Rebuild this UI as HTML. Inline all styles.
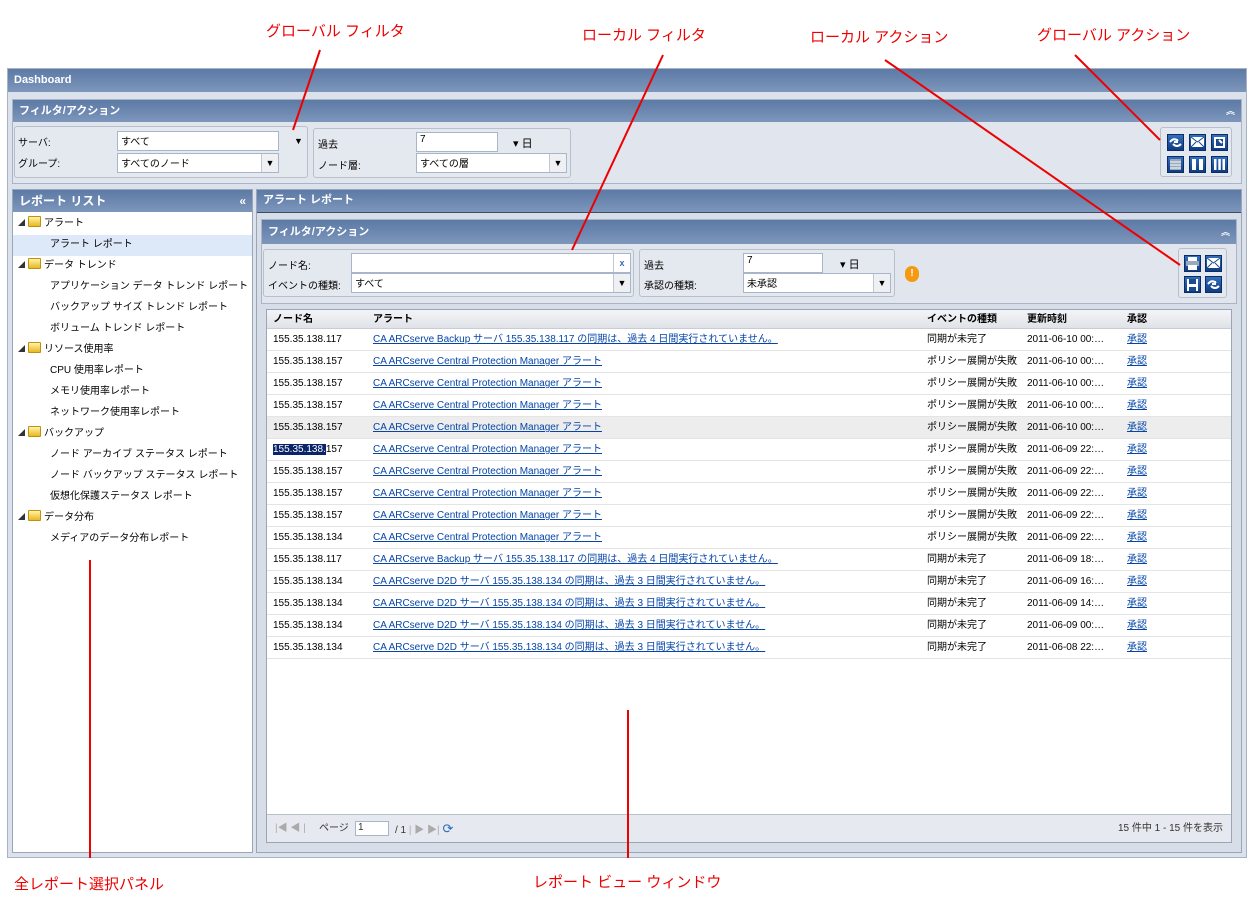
<!DOCTYPE html>
<html><head><meta charset="utf-8"><style>
*{box-sizing:border-box;margin:0;padding:0}
body{width:1252px;height:913px;background:#fff;position:relative;font-family:"Liberation Sans","Noto Sans CJK JP",sans-serif;font-size:10px;color:#000;overflow:hidden}
.a{position:absolute}
.hd{background:linear-gradient(#5c7aa6,#7d96bb);color:#fff;font-weight:bold;font-size:11px;padding-left:6px}
.fs{border:1px solid #b8c0cc;border-radius:3px;background:#e4e8ef}
.in{background:#fff;border:1px solid #a9b6c9;font-size:10px;padding:1px 3px}
.dd{position:absolute;width:17px;border-left:1px solid #c0c8d4;background:#eef0f4;font-size:9px;text-align:center}
.ic{position:absolute;width:17px;height:17px}
.lbl{position:absolute;color:#e00;font-size:15px}
.row{position:absolute;left:0;width:964px;height:22px;border-bottom:1px solid #e4e4e4;font-size:10px;line-height:21px}
.row span{position:absolute}
.lk{color:#0645a8;text-decoration:underline}
.tr{position:absolute;font-size:10px;height:21px;line-height:21px}
.ex{display:inline-block;width:0;height:0;border-left:7px solid transparent;border-bottom:7px solid #333;margin-right:3px}
.fd{display:inline-block;width:13px;height:11px;background:linear-gradient(#fff3a8,#e8b820);border:1px solid #c09010;border-radius:1px;vertical-align:-1px;margin-right:3px}
</style></head><body>
<svg width="0" height="0" style="position:absolute"><defs>
<linearGradient id="g" x1="0" y1="0" x2="0" y2="1"><stop offset="0" stop-color="#3470c0"/><stop offset="1" stop-color="#0e3a80"/></linearGradient>
<symbol id="bx" viewBox="0 0 17 17"><rect x=".5" y=".5" width="16" height="16" fill="url(#g)" stroke="#0b2d66"/></symbol>
</defs></svg>
<!-- annotations -->
<div class="lbl" style="left:266px;top:20px">グローバル フィルタ</div>
<div class="lbl" style="left:582px;top:24px">ローカル フィルタ</div>
<div class="lbl" style="left:810px;top:26px">ローカル アクション</div>
<div class="lbl" style="left:1037px;top:24px">グローバル アクション</div>
<div class="lbl" style="left:14px;top:873px">全レポート選択パネル</div>
<div class="lbl" style="left:533px;top:871px">レポート ビュー ウィンドウ</div>

<div class="a" style="left:7px;top:68px;width:1240px;height:790px;background:#dce2ec;border:1px solid #a8b2c2"></div>
<div class="a hd" style="left:8px;top:69px;width:1238px;height:23px;line-height:23px">Dashboard</div>

<div class="a" style="left:12px;top:99px;width:1230px;height:85px;background:#e0e5ee;border:1px solid #aab4c4"></div>
<div class="a hd" style="left:13px;top:100px;width:1228px;height:22px;line-height:22px">フィルタ/アクション<span style="position:absolute;right:6px;font-size:9px">︽</span></div>
<div class="a fs" style="left:14px;top:126px;width:294px;height:52px"></div>
<div class="a" style="left:18px;top:134px">サーバ:</div>
<div class="a" style="left:18px;top:155px">グループ:</div>
<div class="a in" style="left:117px;top:131px;width:162px;height:20px">すべて</div>
<div class="a" style="left:294px;top:136px;font-size:9px">▼</div>
<div class="a in" style="left:117px;top:153px;width:162px;height:20px">すべてのノード<div class="dd" style="right:0;top:0;height:18px;line-height:18px">▼</div></div>
<div class="a fs" style="left:313px;top:128px;width:258px;height:50px"></div>
<div class="a" style="left:318px;top:136px">過去</div>
<div class="a" style="left:318px;top:157px">ノード層:</div>
<div class="a in" style="left:416px;top:132px;width:82px;height:20px">7</div>
<div class="a" style="left:513px;top:135px;font-size:11px">▾ 日</div>
<div class="a in" style="left:416px;top:153px;width:151px;height:20px">すべての層<div class="dd" style="right:0;top:0;height:18px;line-height:18px">▼</div></div>
<div class="a fs" style="left:1160px;top:127px;width:72px;height:50px"></div>
<svg class="a" style="left:1160px;top:127px" width="72" height="50">
<use href="#bx" x="7" y="7" width="17" height="17"/><path d="M10 15 q4-5 8-1 M17 12v3h-3 M21 17 q-4 4-8 0" stroke="#fff" stroke-width="2" fill="none"/>
<use href="#bx" x="29" y="7" width="17" height="17"/><rect x="31" y="10" width="13" height="10" fill="#fff"/><path d="M31 10l6.5 5 6.5-5M31 20l5-5M44 20l-5-5" stroke="#1a4a90" fill="none"/>
<use href="#bx" x="51" y="7" width="17" height="17"/><rect x="54" y="10" width="11" height="11" fill="#fff"/><rect x="56" y="12" width="7" height="7" fill="#1a4a90"/><path d="M59 13l3 3" stroke="#fff" stroke-width="2"/>
<use href="#bx" x="7" y="29" width="17" height="17"/><rect x="10" y="32" width="11" height="11" fill="#9ab"/><path d="M10 35h11M10 38h11M10 41h11" stroke="#fff"/>
<use href="#bx" x="29" y="29" width="17" height="17"/><rect x="32" y="32" width="4" height="11" fill="#fff"/><rect x="39" y="32" width="4" height="11" fill="#fff"/>
<use href="#bx" x="51" y="29" width="17" height="17"/><rect x="54" y="32" width="2.5" height="11" fill="#fff"/><rect x="58.3" y="32" width="2.5" height="11" fill="#fff"/><rect x="62.5" y="32" width="2.5" height="11" fill="#fff"/>
</svg>

<div class="a" style="left:12px;top:189px;width:241px;height:664px;background:#fff;border:1px solid #9aa6b8"></div>
<div class="a hd" style="left:13px;top:190px;width:239px;height:22px;line-height:22px;font-size:12px">レポート リスト<span style="position:absolute;right:6px">«</span></div>
<div class="a" style="left:13px;top:235px;width:239px;height:21px;background:#dde8f8"></div>
<div class="tr" style="left:18px;top:213px"><i class="ex"></i><i class="fd"></i>アラート</div>
<div class="tr" style="left:50px;top:234px">アラート レポート</div>
<div class="tr" style="left:18px;top:255px"><i class="ex"></i><i class="fd"></i>データ トレンド</div>
<div class="tr" style="left:50px;top:276px">アプリケーション データ トレンド レポート</div>
<div class="tr" style="left:50px;top:297px">バックアップ サイズ トレンド レポート</div>
<div class="tr" style="left:50px;top:318px">ボリューム トレンド レポート</div>
<div class="tr" style="left:18px;top:339px"><i class="ex"></i><i class="fd"></i>リソース使用率</div>
<div class="tr" style="left:50px;top:360px">CPU 使用率レポート</div>
<div class="tr" style="left:50px;top:381px">メモリ使用率レポート</div>
<div class="tr" style="left:50px;top:402px">ネットワーク使用率レポート</div>
<div class="tr" style="left:18px;top:423px"><i class="ex"></i><i class="fd"></i>バックアップ</div>
<div class="tr" style="left:50px;top:444px">ノード アーカイブ ステータス レポート</div>
<div class="tr" style="left:50px;top:465px">ノード バックアップ ステータス レポート</div>
<div class="tr" style="left:50px;top:486px">仮想化保護ステータス レポート</div>
<div class="tr" style="left:18px;top:507px"><i class="ex"></i><i class="fd"></i>データ分布</div>
<div class="tr" style="left:50px;top:528px">メディアのデータ分布レポート</div>

<div class="a" style="left:256px;top:189px;width:986px;height:664px;background:#d8dee8;border:1px solid #9aa6b8"></div>
<div class="a hd" style="left:257px;top:190px;width:984px;height:23px;line-height:21px;border-bottom:1px solid #3d4d66">アラート レポート</div>
<div class="a" style="left:261px;top:219px;width:976px;height:85px;background:#e0e5ee;border:1px solid #aab4c4"></div>
<div class="a hd" style="left:262px;top:220px;width:974px;height:24px;line-height:24px">フィルタ/アクション<span style="position:absolute;right:6px;font-size:9px">︽</span></div>
<div class="a fs" style="left:263px;top:249px;width:371px;height:48px"></div>
<div class="a" style="left:268px;top:257px">ノード名:</div>
<div class="a" style="left:268px;top:277px">イベントの種類:</div>
<div class="a in" style="left:351px;top:253px;width:280px;height:20px"><div class="dd" style="right:0;top:0;height:18px;line-height:18px;color:#3a6ab0;background:#fff;font-weight:bold">x</div></div>
<div class="a in" style="left:351px;top:273px;width:280px;height:20px">すべて<div class="dd" style="right:0;top:0;height:18px;line-height:18px">▼</div></div>
<div class="a fs" style="left:639px;top:249px;width:256px;height:48px"></div>
<div class="a" style="left:644px;top:257px">過去</div>
<div class="a" style="left:644px;top:277px">承認の種類:</div>
<div class="a in" style="left:743px;top:253px;width:80px;height:20px">7</div>
<div class="a" style="left:840px;top:256px;font-size:11px">▾ 日</div>
<div class="a in" style="left:743px;top:273px;width:148px;height:20px">未承認<div class="dd" style="right:0;top:0;height:18px;line-height:18px">▼</div></div>
<div class="a" style="left:905px;top:266px;width:14px;height:16px;border-radius:7px;background:#f39a12;color:#fff;font-weight:bold;text-align:center;line-height:16px">!</div>
<div class="a fs" style="left:1178px;top:248px;width:49px;height:50px"></div>
<svg class="a" style="left:1178px;top:248px" width="49" height="50">
<use href="#bx" x="6" y="7" width="17" height="17"/><rect x="10" y="9" width="9" height="4" fill="#fff"/><rect x="8" y="13" width="13" height="5" fill="#9ab"/><rect x="10" y="17" width="9" height="5" fill="#fff"/>
<use href="#bx" x="27" y="7" width="17" height="17"/><rect x="29" y="10" width="13" height="10" fill="#fff"/><path d="M29 10l6.5 5 6.5-5M29 20l5-5M42 20l-5-5" stroke="#1a4a90" fill="none"/>
<use href="#bx" x="6" y="28" width="17" height="17"/><path d="M9 31h11v12h-11z" fill="#fff"/><rect x="11" y="31" width="7" height="5" fill="#1a4a90"/><rect x="11" y="39" width="7" height="4" fill="#1a4a90"/>
<use href="#bx" x="27" y="28" width="17" height="17"/><path d="M30 36 q4-5 8-1 M37 33v3h-3 M41 38 q-4 4-8 0" stroke="#fff" stroke-width="2" fill="none"/>
</svg>

<div class="a" style="left:266px;top:309px;width:966px;height:534px;background:#fff;border:1px solid #9aa6b8">
<div class="a" style="left:0;top:0;width:964px;height:19px;background:linear-gradient(#f4f5f7,#dfe2e8);border-bottom:1px solid #c8ccd4;font-weight:bold;line-height:19px">
<span class="a" style="left:6px">ノード名</span><span class="a" style="left:106px">アラート</span><span class="a" style="left:660px">イベントの種類</span><span class="a" style="left:760px">更新時刻</span><span class="a" style="left:860px">承認</span></div>
<div id="rows"></div>
<div class="a" style="left:0;top:504px;width:964px;height:28px;background:#e6e9ef;border-top:1px solid #b8c0cc;line-height:28px;color:#333">
<span class="a" style="left:8px;color:#aaa">|◀ ◀ |</span><span class="a" style="left:52px">ページ</span><span class="a in" style="left:88px;top:6px;width:34px;height:15px;line-height:12px;padding:0 2px">1</span><span class="a" style="left:128px">/ 1 <span style="color:#aaa">| ▶ ▶|</span> <span style="color:#2a6bbd;font-size:13px">⟳</span></span><span class="a" style="right:8px">15 件中 1 - 15 件を表示</span></div>
</div>
<script>
var d=[["155.35.138.117","CA ARCserve Backup サーバ 155.35.138.117 の同期は、過去 4 日間実行されていません。","同期が未完了","2011-06-10 00:…"]];
var P="CA ARCserve Central Protection Manager アラート";
for(var i=0;i<4;i++)d.push(["155.35.138.157",P,"ポリシー展開が失敗","2011-06-10 00:…"]);
for(var i=0;i<4;i++)d.push(["155.35.138.157",P,"ポリシー展開が失敗","2011-06-09 22:…"]);
d.push(["155.35.138.134",P,"ポリシー展開が失敗","2011-06-09 22:…"]);
d.push(["155.35.138.117","CA ARCserve Backup サーバ 155.35.138.117 の同期は、過去 4 日間実行されていません。","同期が未完了","2011-06-09 18:…"]);
var D=["2011-06-09 16:","2011-06-09 14:","2011-06-09 00:","2011-06-08 22:"];
for(var i=0;i<4;i++)d.push(["155.35.138.134","CA ARCserve D2D サーバ 155.35.138.134 の同期は、過去 3 日間実行されていません。","同期が未完了",D[i]+"…"]);
var s="";d.forEach(function(r,i){var bg=i==4?"#ededed":"#fff";var n=i==5?'<b style="background:#0a246a;color:#fff;font-weight:normal">155.35.138.</b>157':r[0];
s+='<div class="row" style="top:'+(19+i*22)+'px;background:'+bg+'"><span style="left:6px">'+n+'</span><span class="lk" style="left:106px">'+r[1]+'</span><span style="left:660px">'+r[2]+'</span><span style="left:760px">'+r[3]+'</span><span class="lk" style="left:860px">承認</span></div>';});
document.getElementById("rows").innerHTML=s;
</script>

<svg class="a" style="left:0;top:0" width="1252" height="913"><g stroke="#e00" stroke-width="2">
<line x1="320" y1="50" x2="293" y2="130"/><line x1="663" y1="55" x2="572" y2="250"/>
<line x1="885" y1="60" x2="1180" y2="265"/><line x1="1075" y1="55" x2="1160" y2="140"/>
<line x1="90" y1="560" x2="90" y2="858"/><line x1="628" y1="710" x2="628" y2="858"/></g></svg>
</body></html>
